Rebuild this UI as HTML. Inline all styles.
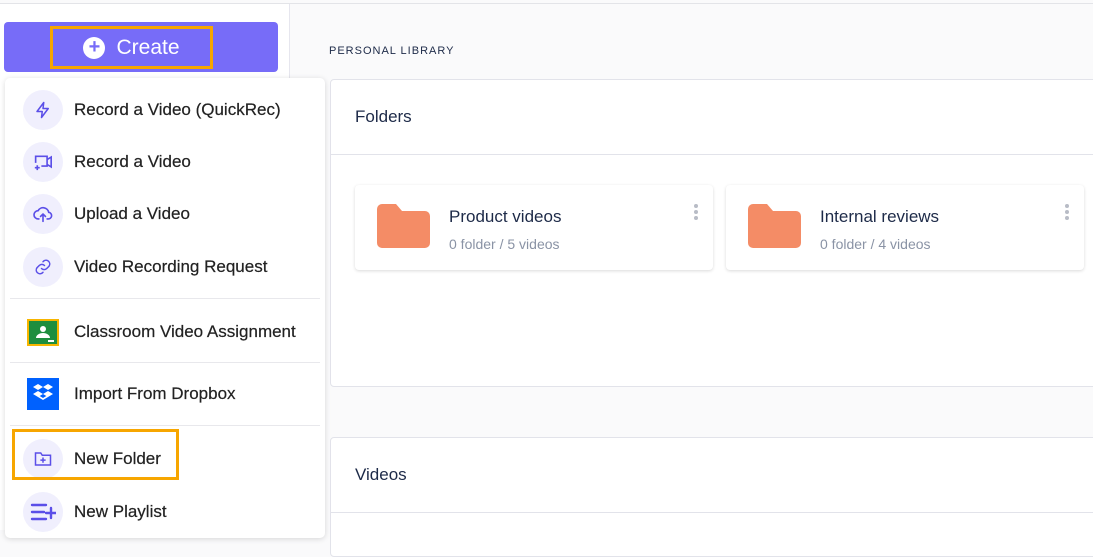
<!DOCTYPE html>
<html><head><style>
*{margin:0;padding:0;box-sizing:border-box}
body{width:1093px;height:530px;overflow:hidden;background:#fafafb;font-family:"Liberation Sans",sans-serif;position:relative}
.abs{position:absolute}
.topline{left:0;top:3px;width:1093px;height:1px;background:#e3e4e8}
.side{left:0;top:4px;width:290px;height:526px;background:#fff;border-right:1px solid #e6e6ee}
.btn{left:4px;top:22px;width:274px;height:50px;background:#776cf8;border-radius:4px}
.obox{border:3px solid #f7a600}
.create{left:50px;top:26px;width:163px;height:43px;color:#fff;font-size:21px;display:flex;align-items:center;justify-content:center;gap:11px}
.plus{width:22px;height:22px;border-radius:50%;background:#fff;color:#776cf8;font-size:20px;line-height:21px;text-align:center;font-weight:bold}
.menu{left:5px;top:78px;width:320px;height:460px;background:#fff;border-radius:5px;box-shadow:0 1px 6px rgba(0,0,0,.15)}
.item{position:absolute;left:0;width:320px;display:flex;align-items:center;font-size:17px;color:#222;white-space:nowrap;-webkit-text-stroke:0.2px #222}
.item .ic{flex:none;width:40px;height:40px;border-radius:50%;background:#f0effd;margin-left:18px;margin-right:11px;display:flex;align-items:center;justify-content:center}
.sep{position:absolute;left:5px;width:310px;height:1px;background:#e8e8ec}
.panel{background:#fff;border:1px solid #e2e3ea;border-radius:4px}
.card{background:#fff;border-radius:4px;box-shadow:0 1px 3px rgba(0,0,0,.15);width:358px;height:85px}
.ct{position:absolute;left:94px;top:22px;font-size:17px;color:#1d2a48}
.cs{position:absolute;left:94px;top:51px;font-size:14px;color:#8a93a5}
.fold{position:absolute;left:22px;top:18px;width:53px;height:45px}
.dots{position:absolute;right:15px;top:19px;width:4px}
.dots i{display:block;width:4px;height:4px;border-radius:50%;background:#b8bcc6;margin-bottom:2px}
</style></head><body>
<div class="abs topline"></div>
<div class="abs side"></div>
<div class="abs btn"></div>
<div class="abs create obox"><div class="plus">+</div>Create</div>

<div class="abs" style="left:329px;top:45px;font-size:11px;letter-spacing:1px;color:#1d2a48">PERSONAL LIBRARY</div>
<div class="abs panel" style="left:330px;top:79px;width:780px;height:308px"></div>
<div class="abs" style="left:331px;top:154px;width:762px;height:1px;background:#e2e3ea"></div>
<div class="abs" style="left:355px;top:107px;font-size:17px;color:#1d2a48">Folders</div>

<div class="abs card" style="left:355px;top:185px">
<svg class="fold" viewBox="0 0 53 45"><path d="M0 6a5 5 0 0 1 5-5h14l6 7h23a5 5 0 0 1 5 5v27a5 5 0 0 1-5 5H5a5 5 0 0 1-5-5z" fill="#f48c66"/></svg>
<div class="ct">Product videos</div><div class="cs">0 folder / 5 videos</div>
<div class="dots"><i></i><i></i><i></i></div></div>
<div class="abs card" style="left:726px;top:185px">
<svg class="fold" viewBox="0 0 53 45"><path d="M0 6a5 5 0 0 1 5-5h14l6 7h23a5 5 0 0 1 5 5v27a5 5 0 0 1-5 5H5a5 5 0 0 1-5-5z" fill="#f48c66"/></svg>
<div class="ct">Internal reviews</div><div class="cs">0 folder / 4 videos</div>
<div class="dots"><i></i><i></i><i></i></div></div>

<div class="abs panel" style="left:330px;top:437px;width:780px;height:120px"></div>
<div class="abs" style="left:331px;top:512px;width:762px;height:1px;background:#e2e3ea"></div>
<div class="abs" style="left:355px;top:465px;font-size:17px;color:#1d2a48">Videos</div>

<div class="abs menu">
<div class="item" style="top:12px"><div class="ic"><svg width="18" height="18" viewBox="0 0 24 24" fill="none" stroke="#5b4fe8" stroke-width="2" stroke-linejoin="round"><path d="M13 2L4 14h7l-1 8 9-12h-7z"/></svg></div>Record a Video (QuickRec)</div>
<div class="item" style="top:64px"><div class="ic"><svg width="20" height="18" viewBox="0 0 24 22" fill="none" stroke="#5b4fe8" stroke-width="2"><path d="M3 12V4h14v12H10M17 8l5-3v12l-5-3M5 15v6M2 18h6"/></svg></div>Record a Video</div>
<div class="item" style="top:116px"><div class="ic"><svg width="20" height="18" viewBox="0 0 24 22" fill="none" stroke="#5b4fe8" stroke-width="2" stroke-linecap="round"><path d="M7 17H6a5 5 0 0 1 0-10 7 7 0 0 1 13 2 4 4 0 0 1-1 8h-1M12 20v-9M9 14l3-3 3 3"/></svg></div>Upload a Video</div>
<div class="item" style="top:169px"><div class="ic"><svg width="18" height="18" viewBox="0 0 24 24" fill="none" stroke="#5b4fe8" stroke-width="2" stroke-linecap="round"><path d="M10 14a5 5 0 0 0 7 0l3-3a5 5 0 0 0-7-7l-1 1M14 10a5 5 0 0 0-7 0l-3 3a5 5 0 0 0 7 7l1-1"/></svg></div>Video Recording Request</div>
<div class="sep" style="top:220px"></div>
<div class="item" style="top:234px"><div class="ic" style="background:none;border-radius:0"><svg width="32" height="27" viewBox="0 0 32 27"><rect x="0" y="0" width="32" height="27" fill="#f7b500"/><rect x="2" y="2" width="28" height="23" fill="#1e8e3e"/><circle cx="16" cy="10" r="3" fill="#fff"/><path d="M9 19a7 5 0 0 1 14 0z" fill="#fff"/><rect x="21" y="21" width="6" height="2" fill="#fff"/></svg></div>Classroom Video Assignment</div>
<div class="sep" style="top:284px"></div>
<div class="item" style="top:300px"><div class="ic" style="background:#0061fe;border-radius:0;width:32px;height:32px;margin-left:22px;margin-right:15px"><svg width="22" height="20" viewBox="0 0 22 20" fill="#fff"><path d="M6 0l5 3-5 3-5-3zM16 0l5 3-5 3-5-3zM6 7l5 3-5 3-5-3zM16 7l5 3-5 3-5-3zM11 14l5-3 0 2-5 3-5-3v-2z"/></svg></div>Import From Dropbox</div>
<div class="sep" style="top:347px"></div>
<div class="item" style="top:361px"><div class="ic"><svg width="18" height="16" viewBox="0 0 24 20" fill="none" stroke="#5b4fe8" stroke-width="2"><path d="M2 2h7l2 3h11v13H2zM12 8v7M8.5 11.5h7"/></svg></div>New Folder</div>
<div class="item" style="top:414px"><div class="ic"><svg width="26" height="20" viewBox="0 0 26 20" stroke="#5b4fe8" stroke-width="2.4" stroke-linecap="round"><path d="M2 3h14M2 10h12M2 17h14M21 6v10M16 11h10"/></svg></div>New Playlist</div>
</div>
<div class="abs obox" style="left:12px;top:429px;width:167px;height:51px"></div>
</body></html>
